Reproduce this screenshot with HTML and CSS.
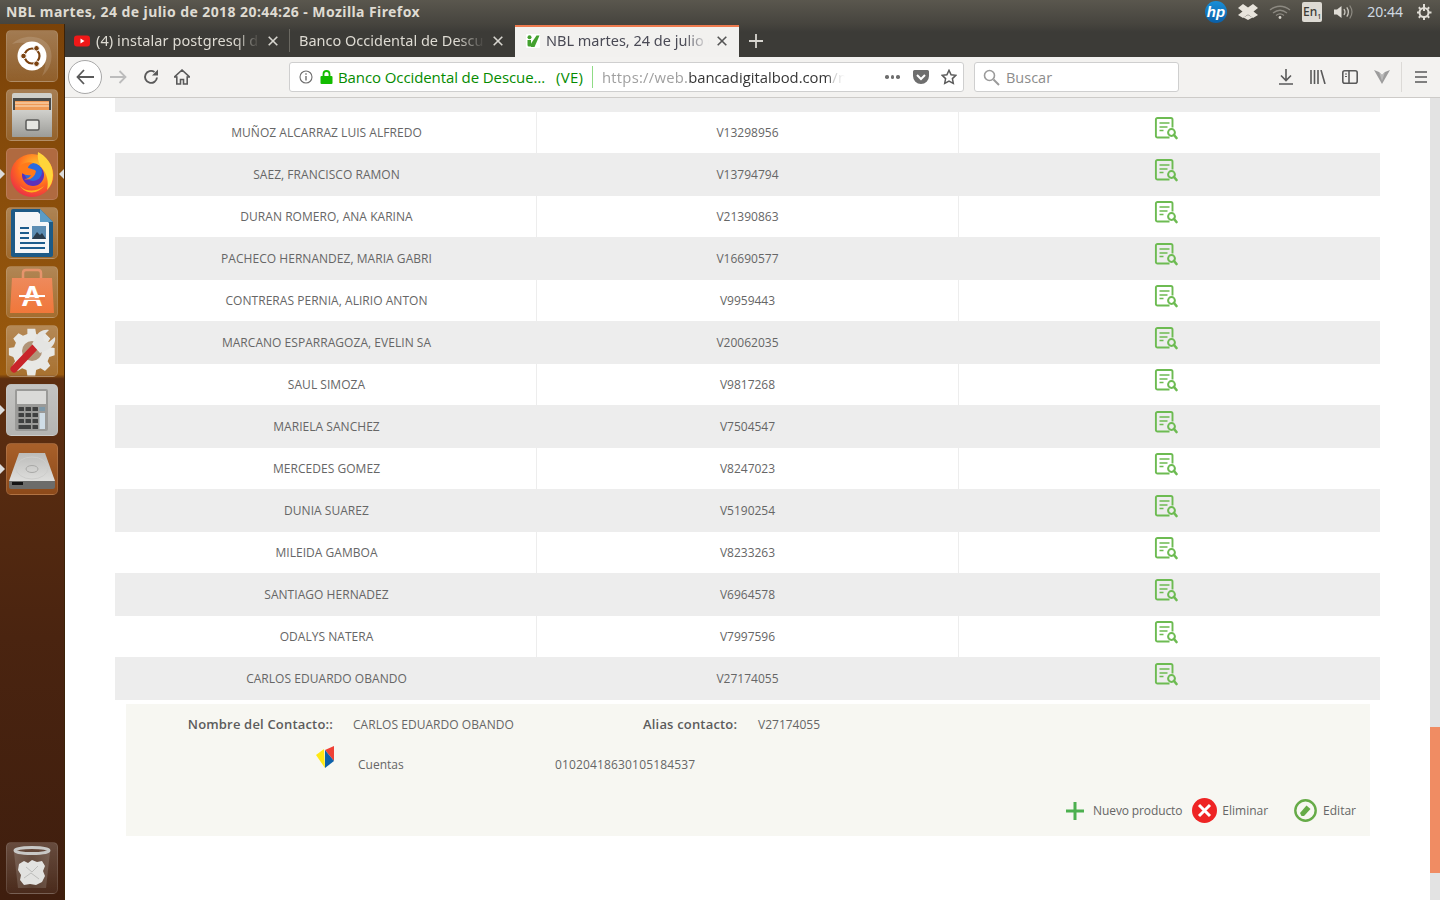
FILE: index.html
```html
<!DOCTYPE html>
<html lang="es">
<head>
<meta charset="utf-8">
<title>NBL</title>
<link rel="stylesheet" href="styles.css">
</head>
<body>
<svg class="defs" width="0" height="0" aria-hidden="true">
  <symbol id="doc" viewBox="0 0 24 24">
    <path d="M15.500 20.500H3.500a1.600 1.600 0 0 1-1.600-1.600V2.600A1.600 1.600 0 0 1 3.500 1h13.400a1.600 1.600 0 0 1 1.600 1.600v8" fill="none" stroke="#6dbb52" stroke-width="1.900"/>
    <path d="M5.500 6h10M5.500 10h8M5.500 13.500h4" fill="none" stroke="#6dbb52" stroke-width="1.700"/>
    <circle cx="17.500" cy="15.500" r="3.400" fill="none" stroke="#6dbb52" stroke-width="2"/>
    <path d="M20 18l2.500 3" stroke="#6dbb52" stroke-width="2.600" stroke-linecap="round"/>
  </symbol>
</svg>

<header class="topbar">
  <span class="wintitle">NBL martes, 24 de julio de 2018 20:44:26 - Mozilla Firefox</span>
  <div class="tray">
    <svg class="hp" width="24" height="24" viewBox="0 0 24 24"><defs><linearGradient id="hpg" x1="0" y1="0" x2="0" y2="1"><stop offset="0" stop-color="#1a8fd8"/><stop offset="1" stop-color="#0a5fa8"/></linearGradient></defs><circle cx="12" cy="12" r="11" fill="url(#hpg)"/><text x="12" y="17" text-anchor="middle" class="hptext">hp</text></svg>
    <svg class="dbx" width="20" height="16" viewBox="0 0 20 16"><path d="M5 0l5 3.500L15 0l5 4-4.500 3.500L20 11l-5 3-5-3.500L5 14l-5-3 4.500-3.500L0 4z" fill="#e8e4dc"/><path d="M5.500 13.500L10 11l4.500 2.500L10 16z" fill="#e8e4dc"/></svg>
    <svg class="wifi" width="22" height="14" viewBox="0 0 22 14"><g fill="none" stroke="#8d8a82" stroke-width="1.300"><path d="M1 5c6-5 14-5 20 0"/><path d="M4 8c4.500-3.500 9.500-3.500 14 0"/><path d="M7 10.500c2.500-2 5.500-2 8 0"/></g><circle cx="11" cy="12.500" r="1.400" fill="#d8d4cc"/></svg>
    <span class="lang">En<sub>1</sub></span>
    <svg class="vol" width="20" height="16" viewBox="0 0 20 16"><path d="M0 5.500h3L7.500 2v12L3 10.500H0z" fill="#e0ddd6"/><g fill="none" stroke="#c8c5bd" stroke-width="1.300"><path d="M10 5c1.300 2 1.300 4 0 6"/><path d="M12.800 3.300c2 3 2 6.400 0 9.400"/></g><path d="M15.700 1.500c2.800 4 2.800 9 0 13" fill="none" stroke="#8d8a82" stroke-width="1.200"/></svg>
    <span class="clock">20:44</span>
    <svg class="power" width="16" height="16" viewBox="0 0 16 16"><circle cx="8" cy="8.500" r="4.500" fill="none" stroke="#e0ddd6" stroke-width="2"/><path d="M8 0v7M8 13v3M1 8.500h2M13 8.500h2.500M2.800 3.300l1.600 1.600M11.600 4.900l1.600-1.600M2.800 13.700l1.600-1.600M11.600 12.100l1.600 1.600" stroke="#e0ddd6" stroke-width="2"/></svg>
  </div>
</header>

<div class="desk">
  <nav class="launcher">
    <div class="tile tile-ubuntu">
      <svg width="52" height="52" viewBox="0 0 52 52"><path d="M6 14c12-11 32-9 38 4 4 10 0 22-8 28 6-12 4-24-6-30-8-4-17-4-24-2z" fill="#fff" opacity=".14"/><circle cx="26" cy="26" r="14.500" fill="#fff"/><circle cx="26" cy="26" r="7.500" fill="none" stroke="#7b4210" stroke-width="2.200"/><g fill="#7b4210" stroke="#fff"><circle cx="17.500" cy="26" r="2.800"/><circle cx="30.500" cy="18.300" r="2.800"/><circle cx="30.500" cy="33.700" r="2.800"/></g></svg>
    </div>
    <div class="tile tile-files">
      <svg width="52" height="52" viewBox="0 0 52 52"><defs><linearGradient id="fg" x1="0" y1="0" x2="0" y2="1"><stop offset="0" stop-color="#d0d0cc"/><stop offset="1" stop-color="#9c9c98"/></linearGradient></defs><rect x="6" y="4" width="40" height="44" rx="2" fill="#cfcfca"/><rect x="7" y="9" width="38" height="13" fill="#4a4a48"/><rect x="9" y="12" width="34" height="9" fill="#ef9a56"/><path d="M9 14h34M9 17h34" stroke="#fbe3c6" stroke-width="1"/><rect x="6" y="21" width="40" height="27" rx="1" fill="url(#fg)"/><rect x="20" y="31" width="13" height="10" rx="1.500" fill="#e6e6e2" stroke="#5a5a58" stroke-width="1.500"/></svg>
    </div>
    <div class="tile tile-ff">
      <svg width="52" height="52" viewBox="0 0 52 52"><defs><radialGradient id="ffg" cx=".6" cy=".3" r=".8"><stop offset="0" stop-color="#ffcb2e"/><stop offset=".55" stop-color="#ff6a1f"/><stop offset="1" stop-color="#e6224f"/></radialGradient></defs><circle cx="26" cy="27.500" r="21.500" fill="url(#ffg)"/><path d="M32 4c8 4 15 12 15 23 0 6-2 11-6 15 2-8 0-16-5-22-3-4-5-9-4-16z" fill="#ffd53a"/><circle cx="27" cy="27" r="11" fill="#5b31b8"/><circle cx="27" cy="24" r="9" fill="#2a6be0"/><path d="M12 20c4-5 10-7 15-5-3 1-5 3-5 5 3 1 6 1 8 3-1 6-6 10-12 8 4 0 6-2 7-4-6 1-11-2-13-7z" fill="#ff7a1a"/><path d="M14 38c6 6 16 6 24 0-6 8-18 9-24 0z" fill="#ffb31f"/></svg>
    </div>
    <div class="tile tile-writer">
      <svg width="52" height="52" viewBox="0 0 52 52"><path d="M7 2h27l13 13v33a2 2 0 0 1-2 2H7a2 2 0 0 1-2-2V4a2 2 0 0 1 2-2z" fill="#1d5a86"/><path d="M9 5h23l11 11v30H9z" fill="#f4f6f8"/><path d="M34 2l13 13H34z" fill="#5b9cc6"/><path d="M14 21h9M14 26h9M14 31h9M14 36h25M14 41h25" stroke="#1c5c8c" stroke-width="2.200"/><rect x="26" y="19" width="14" height="13" fill="#5c8db3"/><path d="M26 32l5-7 3 3 2-2 4 6z" fill="#2b3c4c"/></svg>
    </div>
    <div class="tile tile-store">
      <svg width="52" height="52" viewBox="0 0 52 52"><defs><linearGradient id="sg" x1="0" y1="0" x2="0" y2="1"><stop offset="0" stop-color="#ee8a5c"/><stop offset="1" stop-color="#f0773a"/></linearGradient></defs><path d="M17 16V7q0-3 3-3h12q3 0 3 3v9" fill="none" stroke="#e6946c" stroke-width="2.500"/><path d="M6 12h40l2 35H4z" fill="url(#sg)"/><text x="26" y="40" text-anchor="middle" class="storeA">A</text><path d="M13 33h26" stroke="#f0773a" stroke-width="1.500"/><path d="M13 30h26" stroke="#fff" stroke-width="2"/></svg>
    </div>
    <div class="tile tile-tools">
      <svg width="52" height="52" viewBox="0 0 52 52"><path d="M22 2h9l1 6 5 2 5-3 6 6-3 5 2 5 6 1v8l-6 2-2 5 3 5-6 6-5-3-5 2-1 6h-9l-1-6-5-2-5 3-6-6 3-5-2-5-5-2v-8l6-1 2-5-3-5 6-6 5 3 5-2z" fill="#e8e8e5" transform="translate(2 2) scale(.88)"/><circle cx="26" cy="26" r="10" fill="#b09478"/><path d="M8 44l20-21" stroke="#c9242a" stroke-width="7" stroke-linecap="round"/><path d="M26 19l4-7c2-5 7-8 13-7l-6 6 1 5 5 1 6-5c1 6-3 11-8 13l-7 3z" fill="#e4e4e2"/></svg>
    </div>
    <div class="tile tile-calc">
      <svg width="52" height="52" viewBox="0 0 52 52"><rect x="9" y="5" width="33" height="42" rx="2" fill="#9a9a98"/><rect x="11" y="7" width="29" height="13" fill="#dadad8"/><g fill="#3f4040"><rect x="12.500" y="23" width="5.500" height="4" rx=".5"/><rect x="19.500" y="23" width="5.500" height="4" rx=".5"/><rect x="26.500" y="23" width="5.500" height="4" rx=".5"/><rect x="12.500" y="29" width="5.500" height="4" rx=".5"/><rect x="19.500" y="29" width="5.500" height="4" rx=".5"/><rect x="26.500" y="29" width="5.500" height="4" rx=".5"/><rect x="12.500" y="35" width="5.500" height="4" rx=".5"/><rect x="19.500" y="35" width="5.500" height="4" rx=".5"/><rect x="26.500" y="35" width="5.500" height="4" rx=".5"/><rect x="12.500" y="41" width="12.500" height="4" rx=".5"/><rect x="26.500" y="41" width="5.500" height="4" rx=".5"/></g><rect x="33.500" y="23" width="5.500" height="4" fill="#7d98a8"/><rect x="33.500" y="29" width="5.500" height="16" fill="#cfdde6"/></svg>
    </div>
    <div class="tile tile-disk">
      <svg width="52" height="52" viewBox="0 0 52 52"><defs><linearGradient id="dg" x1="0" y1="0" x2="0" y2="1"><stop offset="0" stop-color="#bcbcba"/><stop offset="1" stop-color="#dededc"/></linearGradient></defs><path d="M13 10h26l10 28H3z" fill="url(#dg)"/><ellipse cx="26" cy="25" rx="16" ry="11" fill="none" stroke="#cdcdcb"/><ellipse cx="26" cy="26" rx="6" ry="3.500" fill="none" stroke="#a9a9a7"/><path d="M3 38h46v6q0 2-2 2H5q-2 0-2-2z" fill="#6c6c6a"/><rect x="6" y="39" width="11" height="3" fill="#151515"/></svg>
    </div>
    <div class="tile tile-trash">
      <svg width="52" height="52" viewBox="0 0 52 52"><defs><linearGradient id="tg" x1="0" y1="0" x2="1" y2="0"><stop offset="0" stop-color="#9a8a80"/><stop offset=".5" stop-color="#6f5d52"/><stop offset="1" stop-color="#9a8a80"/></linearGradient></defs><path d="M8 10h36l-4 36H12z" fill="url(#tg)" opacity=".4"/><ellipse cx="26" cy="8.500" rx="17" ry="3" fill="none" stroke="#c8c8c6" stroke-width="3"/><g fill="#e2e2e0"><path d="M13 22l5-3 4 2 4-3 5 2 5-1 3 5-2 5 2 5-3 6-6 3-6-1-6 1-4-5 1-5-3-5z"/></g><path d="M20 25l6 5 6-6M18 36l7-5 8 6" fill="none" stroke="#bdbdbb"/></svg>
    </div>
    <i class="pip pip-left pip-ff"></i>
    <i class="pip pip-right pip-ff"></i>
    <i class="pip pip-left pip-calc"></i>
    <i class="pip pip-left pip-disk"></i>
  </nav>

  <main class="browser">
    <div class="tabs">
      <div class="tab">
        <svg class="fav-yt" width="16" height="12" viewBox="0 0 16 12"><rect width="16" height="11" y=".5" rx="3" fill="#f01818"/><path d="M6.500 3.500l4 2.500-4 2.500z" fill="#fff"/></svg>
        <span class="tabtext tabtext-yt">(4) instalar postgresql d</span>
        <svg class="tabx" width="10" height="10" viewBox="0 0 10 10"><path d="M.7.700l8.600 8.600M9.300.700L.7 9.300" stroke="#d8d6d0" stroke-width="1.600"/></svg>
      </div>
      <div class="tab tab-sep">
        <span class="tabtext">Banco Occidental de Descu</span>
        <svg class="tabx" width="10" height="10" viewBox="0 0 10 10"><path d="M.7.700l8.600 8.600M9.300.700L.7 9.300" stroke="#d8d6d0" stroke-width="1.600"/></svg>
      </div>
      <div class="tab tab-active">
        <svg class="fav-nbl" width="14" height="14" viewBox="0 0 14 14"><rect width="14" height="14" rx="1" fill="#fff"/><path d="M1.500 6h3.500v6.500H3q-1.500 0-1.500-1.500z" fill="#43a12f"/><circle cx="3.500" cy="3.300" r="2" fill="#43a12f"/><path d="M5 9.500L10.500 1.500h3L8.500 13H5z" fill="#43a12f"/></svg>
        <span class="tabtext">NBL martes, 24 de julio d</span>
        <svg class="tabx" width="10" height="10" viewBox="0 0 10 10"><path d="M.7.700l8.600 8.600M9.300.700L.7 9.300" stroke="#555" stroke-width="1.600"/></svg>
      </div>
      <svg class="newtab" width="14" height="14" viewBox="0 0 14 14"><path d="M7 0v14M0 7h14" stroke="#d8d6d0" stroke-width="1.800"/></svg>
    </div>

    <div class="navbar">
      <div class="back"><svg width="18" height="16" viewBox="0 0 18 16"><path d="M8 1L1.500 8 8 15M2 8h16" fill="none" stroke="#5a5a5a" stroke-width="1.800"/></svg></div>
      <svg class="fwd" width="17" height="16" viewBox="0 0 17 16"><path d="M9.500 2l6 6-6 6M15 8H0" fill="none" stroke="#bcbcbc" stroke-width="1.800"/></svg>
      <svg class="reload" width="16" height="16" viewBox="0 0 16 16"><path d="M14 8.500A6 6 0 1 1 11.500 3" fill="none" stroke="#5a5a5a" stroke-width="1.900"/><path d="M15 .500v6H9z" fill="#5a5a5a"/></svg>
      <svg class="home" width="16" height="16" viewBox="0 0 16 16"><path d="M8 1L.5 8h2.300v7h3.700v-4.500h3V15h3.700V8h2.300z" fill="none" stroke="#5a5a5a" stroke-width="1.600"/></svg>

      <div class="urlbar">
        <svg class="info" width="14" height="14" viewBox="0 0 14 14"><circle cx="7" cy="7" r="6" fill="none" stroke="#6e6e6e" stroke-width="1.100"/><path d="M7 6v4.500M7 3.300v1.500" stroke="#6e6e6e" stroke-width="1.400"/></svg>
        <svg class="lock" width="13" height="14" viewBox="0 0 13 14"><path d="M3.500 6V4a3 3 0 0 1 6 0v2" fill="none" stroke="#12bc00" stroke-width="1.800"/><rect y="6" x=".5" width="12" height="8" rx="1" fill="#12bc00"/></svg>
        <span class="org org-name">Banco Occidental de Descue…</span>
        <span class="org org-cc">(VE)</span>
        <i class="urlsep"></i>
        <span class="url"><span class="dim">https://web.</span>bancadigitalbod.com<span class="dim">/n</span></span>
        <span class="dots"><i></i><i></i><i></i></span>
        <svg class="pocket" width="16" height="14" viewBox="0 0 16 14"><path d="M1.500 0h13A1.500 1.500 0 0 1 16 1.500V6a8 8 0 0 1-16 0V1.500A1.500 1.500 0 0 1 1.500 0z" fill="#6e6e6e"/><path d="M4 5l4 4 4-4" fill="none" stroke="#fff" stroke-width="2"/></svg>
        <svg class="star" width="16" height="16" viewBox="0 0 16 16"><path d="M8 1.300l2.100 4.400 4.700.6-3.400 3.300.9 4.800L8 12.100l-4.300 2.300.9-4.800L1.200 6.300l4.700-.6z" fill="none" stroke="#5a5a5a" stroke-width="1.500"/></svg>
      </div>

      <div class="search">
        <svg class="mag" width="17" height="17" viewBox="0 0 17 17"><circle cx="6.500" cy="6.500" r="5" fill="none" stroke="#9a9a9a" stroke-width="1.600"/><path d="M10.500 10.500l5.500 5.500" stroke="#9a9a9a" stroke-width="2"/></svg>
        <span>Buscar</span>
      </div>

      <div class="tools">
        <svg class="t-dl" width="14" height="16" viewBox="0 0 14 16"><path d="M7 0v11M2 6.500l5 5 5-5M0 15h14" fill="none" stroke="#5a5a5a" stroke-width="1.600"/></svg>
        <svg class="t-lib" width="16" height="14" viewBox="0 0 16 14"><path d="M1 0v14M4.500 0v14M8 0v14M11 0l4 14" stroke="#5a5a5a" stroke-width="1.600" fill="none"/></svg>
        <svg class="t-side" width="16" height="14" viewBox="0 0 16 14"><rect x=".8" y=".8" width="14.400" height="12.400" rx="2" fill="none" stroke="#5a5a5a" stroke-width="1.600"/><path d="M7 1v12" stroke="#5a5a5a" stroke-width="1.600"/><path d="M3 4h2M3 6.500h2" stroke="#5a5a5a"/></svg>
        <svg class="t-v" width="16" height="14" viewBox="0 0 16 14"><path d="M0 0l5 2 3 3 3-3 5-2-8 14z" fill="#9c9c9c"/><path d="M5 2l3 3 3-3-3 9z" fill="#b9b9b9"/></svg>
        <i class="toolsep"></i>
        <svg class="t-menu" width="14" height="12" viewBox="0 0 14 12"><path d="M1 1h12M1 6h12M1 11h12" stroke="#5a5a5a" stroke-width="1.700"/></svg>
      </div>
    </div>

    <div class="viewport">
      <div class="page">
        <div class="table">
          <div class="strip"></div>
          <div class="row"><div class="cell">MUÑOZ ALCARRAZ LUIS ALFREDO</div><div class="cell">V13298956</div><div class="cell act"><svg class="doc"><use href="#doc"/></svg></div></div>
          <div class="row"><div class="cell">SAEZ, FRANCISCO RAMON</div><div class="cell">V13794794</div><div class="cell act"><svg class="doc"><use href="#doc"/></svg></div></div>
          <div class="row"><div class="cell">DURAN ROMERO, ANA KARINA</div><div class="cell">V21390863</div><div class="cell act"><svg class="doc"><use href="#doc"/></svg></div></div>
          <div class="row"><div class="cell">PACHECO HERNANDEZ, MARIA GABRI</div><div class="cell">V16690577</div><div class="cell act"><svg class="doc"><use href="#doc"/></svg></div></div>
          <div class="row"><div class="cell">CONTRERAS PERNIA, ALIRIO ANTON</div><div class="cell">V9959443</div><div class="cell act"><svg class="doc"><use href="#doc"/></svg></div></div>
          <div class="row"><div class="cell">MARCANO ESPARRAGOZA, EVELIN SA</div><div class="cell">V20062035</div><div class="cell act"><svg class="doc"><use href="#doc"/></svg></div></div>
          <div class="row"><div class="cell">SAUL SIMOZA</div><div class="cell">V9817268</div><div class="cell act"><svg class="doc"><use href="#doc"/></svg></div></div>
          <div class="row"><div class="cell">MARIELA SANCHEZ</div><div class="cell">V7504547</div><div class="cell act"><svg class="doc"><use href="#doc"/></svg></div></div>
          <div class="row"><div class="cell">MERCEDES GOMEZ</div><div class="cell">V8247023</div><div class="cell act"><svg class="doc"><use href="#doc"/></svg></div></div>
          <div class="row"><div class="cell">DUNIA SUAREZ</div><div class="cell">V5190254</div><div class="cell act"><svg class="doc"><use href="#doc"/></svg></div></div>
          <div class="row"><div class="cell">MILEIDA GAMBOA</div><div class="cell">V8233263</div><div class="cell act"><svg class="doc"><use href="#doc"/></svg></div></div>
          <div class="row"><div class="cell">SANTIAGO HERNADEZ</div><div class="cell">V6964578</div><div class="cell act"><svg class="doc"><use href="#doc"/></svg></div></div>
          <div class="row"><div class="cell">ODALYS NATERA</div><div class="cell">V7997596</div><div class="cell act"><svg class="doc"><use href="#doc"/></svg></div></div>
          <div class="row"><div class="cell">CARLOS EDUARDO OBANDO</div><div class="cell">V27174055</div><div class="cell act"><svg class="doc"><use href="#doc"/></svg></div></div>
        </div>

        <section class="contact">
          <div class="c-row">
            <span class="c-label c-label-name">Nombre del Contacto::</span>
            <span class="c-value c-value-name">CARLOS EDUARDO OBANDO</span>
            <span class="c-label c-label-alias">Alias contacto:</span>
            <span class="c-value">V27174055</span>
          </div>
          <div class="c-product">
            <svg class="bod" width="18" height="22" viewBox="0 0 18 22"><path d="M0 9l8-6 1 19z" fill="#ffe812"/><path d="M9 4l9-4v15l-9-11z" fill="#ef4136"/><path d="M9 4l9 11-9 7z" fill="#0d62ab"/></svg>
            <span class="p-type">Cuentas</span>
            <span class="p-num">01020418630105184537</span>
          </div>
          <div class="c-actions">
            <svg class="a-plus" width="18" height="18" viewBox="0 0 18 18"><path d="M9 0v18M0 9h18" stroke="#4cb04f" stroke-width="3"/></svg>
            <span class="a-new">Nuevo producto</span>
            <svg class="a-del" width="25" height="25" viewBox="0 0 25 25"><circle cx="12.500" cy="12.500" r="12.500" fill="#ee2424"/><path d="M7 7l11 11M18 7L7 18" stroke="#fff" stroke-width="3"/></svg>
            <span class="a-rem">Eliminar</span>
            <svg class="a-edit" width="23" height="23" viewBox="0 0 23 23"><circle cx="11.500" cy="11.500" r="10.200" fill="none" stroke="#66ab48" stroke-width="2.400"/><path d="M6 14l6.500-7.500 4 3.500L10 17H7.500z" fill="#66ab48"/></svg>
            <span>Editar</span>
          </div>
        </section>
      </div>
      <div class="scrollbar"><div class="thumb"></div></div>
    </div>
  </main>
</div>
</body>
</html>
```

FILE: styles.css
```css
* { box-sizing: border-box; }
html, body { margin: 0; height: 900px; overflow: hidden; }
body { font-family: "Open Sans", "Noto Sans", sans-serif; background: #fff; color: #666; display: flex; flex-direction: column; }
svg { display: block; flex: none; }
.defs { position: absolute; }

.topbar { height: 24px; flex: none; display: flex; align-items: center; padding-left: 6px; background: linear-gradient(#5a574e, #46443e); }
.wintitle { font: 700 14px "Noto Sans", sans-serif; letter-spacing: .42px; color: #dfdbd2; white-space: nowrap; padding-bottom: 1px; }
.tray { margin-left: auto; display: flex; align-items: center; height: 24px; }
.hp { margin-right: 10px; }
.hptext { font: italic 700 15px "Liberation Sans", sans-serif; fill: #fff; }
.dbx { margin-right: 11px; }
.wifi { margin-right: 11px; }
.lang { width: 20px; height: 20px; border-radius: 2px; background: #dedbd4; color: #3c3b37; font: 500 12px/20px "Noto Sans", sans-serif; text-align: center; margin-right: 12px; }
.lang sub { font-size: 7px; line-height: 0; }
.vol { margin-right: 13px; }
.clock { font: 400 14px "Noto Sans", sans-serif; color: #cfd8e0; margin-right: 13px; padding-bottom: 2px; }
.power { margin-right: 8px; }

.desk { flex: 1; min-height: 0; display: flex; }

.launcher { width: 65px; flex: none; position: relative; display: flex; flex-direction: column; gap: 7px; padding: 6px 0 6px 6px; background: linear-gradient(#7a4208 0, #9a5a0e 40%, #5e2f10 40.5%, #4a2410 70%, #3f1e0e 100%); border-right: 1px solid #3c2208; }
.tile { width: 52px; height: 52px; border-radius: 5px; background: linear-gradient(rgba(255,255,255,.3), rgba(255,255,255,.14)); border: 1px solid rgba(255,255,255,.12); overflow: hidden; flex: none; }
.tile svg { margin: -1px; }
.tile-ff { background: #b06a40; }
.tile-calc { background: linear-gradient(#c4c4c2, #b4b4b2); }
.tile-disk { background: linear-gradient(#a8602a, #8d4a1a); }
.tile-trash { margin-top: auto; background: linear-gradient(rgba(255,255,255,.2), rgba(255,255,255,.06)); }
.storeA { font: 700 30px "Liberation Sans", sans-serif; fill: #fff; }
.pip { position: absolute; width: 0; height: 0; border-top: 5px solid transparent; border-bottom: 5px solid transparent; }
.pip-left { left: 0; border-left: 5px solid #dcdcdc; }
.pip-right { right: 0; border-right: 5px solid #dcdcdc; }
.pip-ff { top: 145px; }
.pip-calc { top: 381px; }
.pip-disk { top: 440px; left: 0; }

.browser { flex: 1; min-width: 0; display: flex; flex-direction: column; }
.tabs { height: 33px; flex: none; display: flex; align-items: stretch; background: linear-gradient(#46443e, #3c3b37 8px); font: 400 14.500px "Noto Sans", sans-serif; color: #dedbd3; }
.tab { width: 225px; flex: none; display: flex; align-items: center; padding-left: 9px; position: relative; }
.tab-sep { padding-left: 9px; }
.tab-sep::before { content: ""; position: absolute; left: -1px; top: 5px; bottom: 5px; width: 1px; background: #6a6861; }
.tabtext { flex: 1; min-width: 0; white-space: nowrap; padding-bottom: 2px; -webkit-mask-image: linear-gradient(90deg, #000 85%, transparent 100%); mask-image: linear-gradient(90deg, #000 85%, transparent 100%); }
.tabtext-yt { letter-spacing: .08px; }
.fav-yt { margin-right: 6px; }
.tabx { margin: 0 12px 0 8px; }
.tab-active { width: 224px; margin-top: 1px; border-top: 2px solid #ee7a4e; background: #f2f1ef; color: #4a4a55; padding-left: 11px; }
.tab-active .tabtext { padding-bottom: 4px; }
.tab-active .tabx { margin-bottom: 2px; }
.tab-active .fav-nbl { margin-bottom: 2px; }
.fav-nbl { margin-right: 6px; }
.newtab { align-self: center; margin-left: 10px; }

.navbar { height: 41px; flex: none; display: flex; align-items: center; background: #f3f2f0; border-bottom: 1px solid #cdcbc8; padding-left: 3px; }
.back { width: 34px; height: 34px; border-radius: 50%; border: 1px solid #a8a8a8; background: #fff; display: flex; align-items: center; justify-content: center; flex: none; }
.fwd { margin-left: 8px; }
.reload { margin-left: 16px; }
.home { margin-left: 15px; }
.urlbar { width: 675px; height: 30px; margin-left: 99px; background: #fff; border: 1px solid #cfcfcf; border-radius: 3px; display: flex; align-items: center; padding-left: 9px; flex: none; }
.info { margin-right: 7px; }
.lock { margin-right: 5px; }
.org { font-size: 15px; color: #058b00; white-space: nowrap; letter-spacing: -.1px; flex: none; }
.org-name { width: 209px; }
.org-cc { width: 28px; margin-left: 9px; letter-spacing: .3px; }
.urlsep { width: 1px; height: 22px; background: #8fdc85; margin: 0 9px 0 8px; flex: none; }
.url { width: 243px; flex: none; font-size: 14.800px; color: #363636; white-space: nowrap; -webkit-mask-image: linear-gradient(90deg, #000 92%, transparent 100%); mask-image: linear-gradient(90deg, #000 92%, transparent 100%); }
.dim { color: #a0a0a0; letter-spacing: .25px; }
.dots { display: flex; gap: 2px; margin-left: 40px; }
.dots i { width: 3.500px; height: 3.500px; border-radius: 50%; background: #6e6e6e; }
.pocket { margin-left: 13.500px; }
.star { margin-left: 12px; }
.search { width: 205px; height: 30px; margin-left: 10px; background: #fff; border: 1px solid #cfcfcf; border-radius: 3px; display: flex; align-items: center; padding-left: 8px; gap: 6px; font-size: 14.500px; color: #8c8c8c; flex: none; }
.tools { flex: 1; display: flex; align-items: center; padding-left: 100px; }
.t-lib { margin-left: 17px; }
.t-side { margin-left: 16px; }
.t-v { margin-left: 16px; }
.toolsep { width: 1px; height: 30px; background: #dcdad7; margin-left: 11px; }
.t-menu { margin-left: 12px; }

.viewport { flex: 1; min-height: 0; display: flex; }
.page { flex: 1; min-width: 0; padding-left: 50px; }
.table { width: 1265px; font-size: 12px; color: #666; }
.strip { height: 14px; background: #ededed; }
.row { height: 42px; display: grid; grid-template-columns: 422px 422px 421px; border-bottom: 1px solid #ededed; }
.row:nth-child(odd) { background: #ededed; }
.cell { display: flex; justify-content: center; align-items: center; padding-bottom: 1px; border-right: 1px solid #ededed; }
.cell:first-child { padding-left: 2px; letter-spacing: .04px; }
.cell:last-child { border-right: 0; }
.act { align-items: flex-start; padding: 5px 7px 0 0; }
.doc { width: 24px; height: 24px; }

.contact { margin: 4px 0 0 11px; width: 1244px; height: 132px; padding-top: 10px; background: #f7f7f2; font-size: 12px; color: #666; }
.c-row { display: flex; align-items: center; height: 20px; }
.c-label { font-weight: 600; font-size: 13px; letter-spacing: .18px; color: #5c5c5c; }
.c-label-name { width: 207px; text-align: right; }
.c-value-name { width: 310px; padding-left: 20px; letter-spacing: .05px; }
.c-label-alias { width: 115px; }
.c-product { display: flex; align-items: flex-end; height: 30px; margin-top: 12px; padding-left: 190px; }
.bod { margin-bottom: 8px; }
.p-type { margin-left: 24px; width: 197px; line-height: 16px; padding-bottom: 3px; }
.p-num { line-height: 16px; padding-bottom: 3px; letter-spacing: .15px; }
.c-actions { display: flex; align-items: center; justify-content: flex-end; height: 25px; margin-top: 22px; padding-right: 14px; }
.a-new { margin: 0 10px 0 9px; letter-spacing: -.12px; }
.a-rem { margin: 0 26px 0 5px; }
.a-edit { margin-right: 6px; }

.scrollbar { width: 10px; flex: none; background: #e3e3e3; }
.thumb { height: 146px; margin-top: 629px; background: #f08c63; }
```
